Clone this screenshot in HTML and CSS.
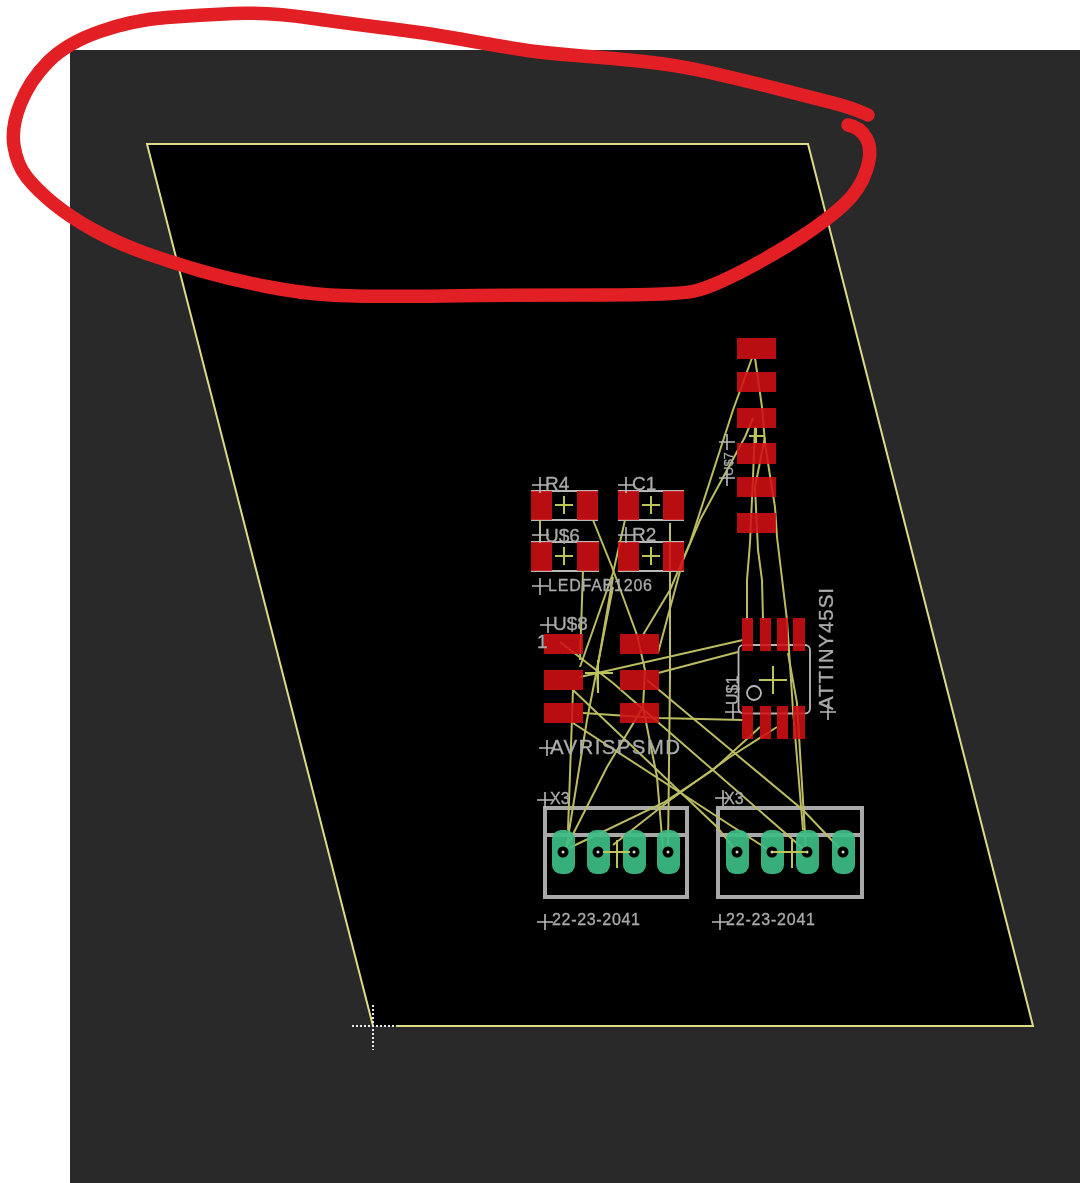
FILE: index.html
```html
<!DOCTYPE html>
<html lang="en">
<head>
<meta charset="utf-8">
<title>Board layout</title>
<link rel="stylesheet" href="styles.css">
</head>
<body>
<main class="stage">
  <section class="panel">
    <svg class="board" viewBox="70 50 1010 1133" width="1010" height="1133" aria-label="PCB board layout">
      <polygon class="ground" points="147,144 808,144 1033,1026 373,1026"/>
      <path class="outline" d="M396 1026H1033L808 144H147L373 1026"/>

      <g class="silk">
        <path d="M531 491H598M531 520H598M618 491H684M618 520H684M531 542H599M531 571H599M618 542H684M618 571H684"/>
        <rect x="738.500" y="645" width="71.500" height="68.500" rx="5"/>
        <circle cx="754" cy="693" r="7"/>
        <path class="thick" d="M545 808H687V897H545ZM545 835H687M718 808H862V897H718ZM718 835H862"/>
      </g>

      <g class="wires">
        <path d="M752 358L733 410L690 543L670 590L643 635"/>
        <path d="M753 418L745 437L700 520L683 560L658 653"/>
        <path d="M755 358L762 407L765 443L768 463L775 507L777 537L787 620L793 710L803 830"/>
        <path d="M755 427L753 477L750 543L747 580L747 620"/>
        <path d="M765 437L755 487L758 550L762 580L763 620"/>
        <path d="M788 653L797 703L806 850"/>
        <path d="M743 640L580 677"/>
        <path d="M738 652L658 673"/>
        <path d="M743 720L658 718L583 713"/>
        <path d="M670 523V677L668 850"/>
        <path d="M625 520L613 573L580 667"/>
        <path d="M613 577L597 670L598 693"/>
        <path d="M613 587L587 720L566 850"/>
        <path d="M593 520L612 567L637 635L645 670L643 707L657 777L663 850"/>
        <path d="M583 570L580 660"/>
        <path d="M540 520V543"/>
        <path d="M573 690L568 830"/>
        <path d="M560 642L613 683L807 852"/>
        <path d="M647 680L803 810L843 852"/>
        <path d="M573 690L717 827L737 852"/>
        <path d="M573 723L730 825L772 852"/>
        <path d="M760 727L713 770L663 803L565 850"/>
        <path d="M777 727L730 757L670 800L613 845"/>
        <path d="M643 707L607 767L565 850"/>
        <path d="M750 436H765"/>
        <path d="M598 852H634M772 852H807"/>
      </g>

      <g class="pads">
        <rect x="737" y="338" width="39" height="21"/><rect x="737" y="372" width="39" height="20"/>
        <rect x="737" y="408" width="39" height="20"/><rect x="737" y="443" width="39" height="21"/>
        <rect x="737" y="477" width="39" height="20"/><rect x="737" y="513" width="39" height="20"/>
        <rect x="531" y="491" width="21" height="29"/><rect x="577" y="491" width="21" height="29"/>
        <rect x="618" y="491" width="21" height="29"/><rect x="663" y="491" width="21" height="29"/>
        <rect x="531" y="542" width="21" height="29"/><rect x="577" y="542" width="22" height="29"/>
        <rect x="618" y="542" width="21" height="29"/><rect x="663" y="542" width="21" height="29"/>
        <rect x="544" y="634" width="39" height="20"/><rect x="544" y="670" width="39" height="20"/>
        <rect x="544" y="703" width="39" height="20"/><rect x="620" y="634" width="39" height="20"/>
        <rect x="620" y="670" width="39" height="20"/><rect x="620" y="703" width="39" height="20"/>
        <rect x="742" y="618" width="11" height="33"/><rect x="760" y="618" width="11" height="33"/>
        <rect x="777" y="618" width="11" height="33"/><rect x="793" y="618" width="12" height="33"/>
        <rect x="742" y="706" width="11" height="33"/><rect x="760" y="706" width="11" height="33"/>
        <rect x="777" y="706" width="11" height="33"/><rect x="793" y="706" width="12" height="33"/>
      </g>

      <g class="contacts">
        <rect x="552" y="830" width="23" height="44" rx="9"/><rect x="587" y="830" width="23" height="44" rx="9"/>
        <rect x="623" y="830" width="23" height="44" rx="9"/><rect x="657" y="830" width="23" height="44" rx="9"/>
        <rect x="726" y="830" width="23" height="44" rx="9"/><rect x="761" y="830" width="23" height="44" rx="9"/>
        <rect x="796" y="830" width="23" height="44" rx="9"/><rect x="832" y="830" width="23" height="44" rx="9"/>
      </g>
      <g class="holes">
        <circle cx="563" cy="852" r="5.500"/><circle cx="598" cy="852" r="5.500"/><circle cx="634" cy="852" r="5.500"/><circle cx="668" cy="852" r="5.500"/>
        <circle cx="737" cy="852" r="5.500"/><circle cx="772" cy="852" r="5.500"/><circle cx="807" cy="852" r="5.500"/><circle cx="843" cy="852" r="5.500"/>
      </g>
      <g class="hole-dots">
        <circle cx="563" cy="852" r="1.500"/><circle cx="598" cy="852" r="1.500"/><circle cx="634" cy="852" r="1.500"/><circle cx="668" cy="852" r="1.500"/>
        <circle cx="737" cy="852" r="1.500"/><circle cx="772" cy="852" r="1.500"/><circle cx="807" cy="852" r="1.500"/><circle cx="843" cy="852" r="1.500"/>
      </g>

      <g class="centres">
        <path d="M564 496V514M555 505H573M651 496V514M642 505H660M564 547V565M555 556H573M651 547V565M642 556H660"/>
        <path d="M598 660V693M585 673H613M756 428V443M749 436H764M773 666V694M759 680H787"/>
        <path d="M617 840V868M792 840V868M603 852H630M773 852H807"/>
      </g>

      <g class="marks">
        <path d="M540 477V493M532 485H549M626 477V493M618 485H635M540 527V543M532 535H549M626 527V543M618 535H635"/>
        <path d="M540 578V595M532 586H549M548 617V633M540 625H556M547 740V756M539 748H555"/>
        <path d="M545 792V808M537 800H553M723 790V806M715 798H731M545 914V930M537 922H553M720 914V930M712 922H728"/>
        <path d="M733 704V720M725 712H741M828 704V720M820 712H836M727 434V450M719 442H735M727 470V486M719 478H735"/>
      </g>

      <g class="labels">
        <text x="545" y="490" class="r">R4</text>
        <text x="632" y="490" class="r">C1</text>
        <text x="545" y="542" class="r">U$6</text>
        <text x="632" y="541" class="r">R2</text>
        <text x="548" y="591" class="mid" textLength="104">LEDFAB1206</text>
        <text x="553" y="630" class="r">U$8</text>
        <text x="537" y="648" class="r">1</text>
        <text x="550" y="754" class="big" textLength="130">AVRISPSMD</text>
        <text x="550" y="804" class="x">X3</text>
        <text x="724" y="804" class="x">X3</text>
        <text x="552" y="925" class="mid" textLength="88">22-23-2041</text>
        <text x="726" y="925" class="mid" textLength="89">22-23-2041</text>
        <text class="x" transform="translate(738 705) rotate(-90)">U$1</text>
        <text class="big" transform="translate(833 710) rotate(-90)" textLength="122">ATTINY45SI</text>
        <text class="tiny" transform="translate(733 476) rotate(-90)">U$7</text>
      </g>

      <path class="dots" d="M352 1026H394M373 1005V1050"/>
    </svg>
  </section>

  <svg class="scribble" viewBox="0 0 1080 1183" width="1080" height="1183" aria-hidden="true">
    <path d="M868 115Q853 108 831.500 102.500Q810 97 776.500 88.500Q743 80 710 72.500Q677 65 643.500 61.500Q610 58 576.500 55.500Q543 53 518 49Q493 45 460 39Q427 33 393.500 29Q360 25 313.500 18.500Q267 12 233.500 13.500Q200 15 166.500 17.500Q133 20 100 31.500Q67 43 48.500 61.500Q30 80 20.500 103.500Q11 127 14 146Q17 165 27 177.500Q37 190 53.500 203.500Q70 217 93.500 230Q117 243 145 253Q173 263 203 271.500Q233 280 266.500 286.500Q300 293 330 295Q360 297 443.500 296Q527 295 602 295Q677 295 694.500 291Q712 287 744.500 270Q777 253 802 236.500Q827 220 843.500 205Q860 190 866.500 170Q873 150 866.500 138.500Q860 127 848 125"/>
  </svg>
</main>
</body>
</html>
```
FILE: styles.css
```css
html, body {
  margin: 0;
  padding: 0;
  background: #ffffff;
}

.stage {
  position: relative;
  width: 1080px;
  height: 1183px;
  padding: 50px 0 0 70px;
  box-sizing: border-box;
  overflow: hidden;
}

.panel {
  width: 1010px;
  height: 1133px;
  background: #292929;
}

.board {
  display: block;
  filter: blur(0.5px);
}

.ground {
  fill: #000000;
}

.outline {
  fill: none;
  stroke: #dcdc86;
  stroke-width: 2;
}

.pads rect {
  fill: #d20f13;
  fill-opacity: 0.88;
}

.silk path,
.silk circle,
.silk rect {
  fill: none;
  stroke: #b8b8b8;
  stroke-width: 1.8;
}

.silk .thick {
  stroke: #a9a9a9;
  stroke-width: 4;
}

.contacts rect {
  fill: #3dbd86;
  fill-opacity: 0.92;
}

.holes circle {
  fill: #000000;
}

.hole-dots circle {
  fill: #cfe0c0;
}

.wires path {
  fill: none;
  stroke: #bcbc62;
  stroke-width: 2;
}

.centres path {
  fill: none;
  stroke: #bcc558;
  stroke-width: 2;
}

.marks path {
  fill: none;
  stroke: #b9b9b9;
  stroke-width: 1.6;
}

.labels text {
  font-family: "Liberation Sans", Arial, sans-serif;
  font-size: 17px;
  fill: #ababab;
  stroke: #ababab;
  stroke-width: 0.3;
}

.labels .r {
  font-size: 19px;
}

.labels .x {
  font-size: 16px;
}

.labels .mid {
  font-size: 16px;
}

.labels .big {
  font-size: 20.5px;
}

.labels .tiny {
  font-size: 13px;
}

.dots {
  fill: none;
  stroke: #ececec;
  stroke-width: 2;
  stroke-dasharray: 2 2;
}

.scribble {
  position: absolute;
  top: 0;
  left: 0;
  pointer-events: none;
}

.scribble path {
  fill: none;
  stroke: #e11f24;
  stroke-width: 13.5;
  stroke-linecap: round;
  stroke-linejoin: round;
}
```
